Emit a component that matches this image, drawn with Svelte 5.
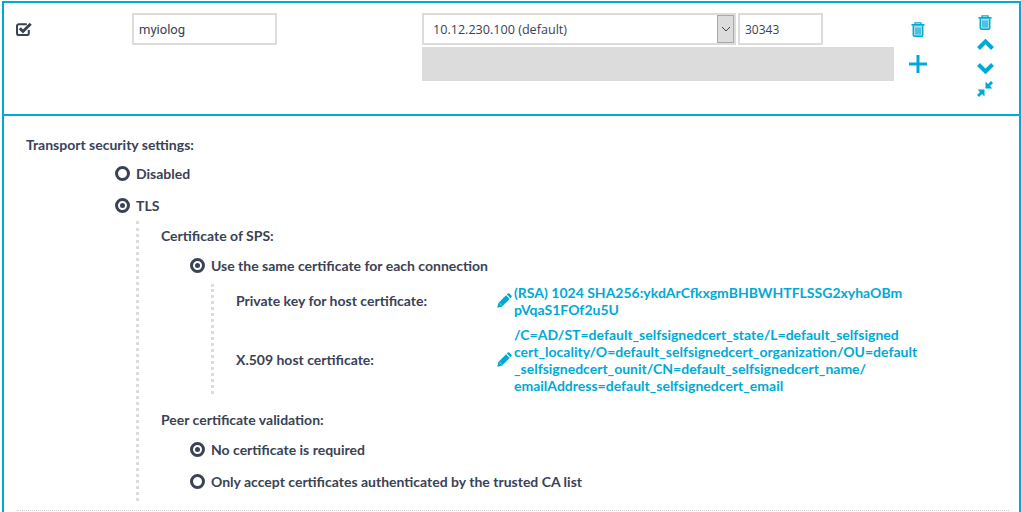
<script>
</script>

{#snippet trash()}
  <svg class="trash" viewBox="0 0 14 15" width="14" height="15">
    <path d="M0.500 2h13v1.800h-13z" fill="#00aad4"/>
    <path d="M4 2.500V.8h6v1.700" fill="none" stroke="#00aad4" stroke-width="1.300"/>
    <path d="M2.300 4v9a1.200 1.200 0 0 0 1.200 1.200h7a1.200 1.200 0 0 0 1.200-1.200V4" fill="#a6e0ef" stroke="#00aad4" stroke-width="1.500"/>
    <path d="M5 5.500v7M7 5.500v7M9 5.500v7" stroke="#00aad4" stroke-width="1.100"/>
  </svg>
{/snippet}

{#snippet pencil()}
  <svg class="pencil" viewBox="0 0 15 15" width="15" height="15">
    <path d="M0.300 14.700l1-4.600 7.800-7.800 3.600 3.600-7.800 7.800z" fill="#00aad4"/>
    <path d="M9.800 1.600l1-1a1.200 1.200 0 0 1 1.600 0l2 2a1.200 1.200 0 0 1 0 1.600l-1 1z" fill="#00aad4"/>
    <path d="M2.600 10.300l1.900 1.900" stroke="#bfeaf5" stroke-width=".8"/>
  </svg>
{/snippet}

<div class="page">
  <div class="head">
    <div class="col-check">
      <svg class="check" viewBox="0 0 16 14" width="16" height="14">
        <path d="M12.800 8v3.200a1.800 1.800 0 0 1-1.800 1.800H2.800A1.800 1.800 0 0 1 1 11.200V4a1.800 1.800 0 0 1 1.800-1.800h8" fill="none" stroke="#3a4256" stroke-width="2"/>
        <path d="M3.800 6.300l3.200 3.200L14.700 1.800" fill="none" stroke="#3a4256" stroke-width="3"/>
      </svg>
    </div>
    <div class="col-name"><input class="field name" value="myiolog" /></div>
    <div class="col-addr">
      <div class="addr-row">
        <div class="field select">
          <span>10.12.230.100 (default)</span>
          <span class="arrow">
            <svg viewBox="0 0 10 6" width="10" height="6"><path d="M1 1l4 4 4-4" fill="none" stroke="#444" stroke-width="1"/></svg>
          </span>
        </div>
        <input class="field port" value="30343" />
      </div>
      <div class="grey"></div>
    </div>
    <div class="col-add">
      {@render trash()}
      <svg class="plus" viewBox="0 0 18 18" width="18" height="18"><path d="M9 0v18M0 9h18" stroke="#00aad4" stroke-width="3"/></svg>
    </div>
    <div class="col-move">
      {@render trash()}
      <svg class="up" viewBox="0 0 17 11" width="17" height="11"><path d="M1.500 9.500L8.500 2.500l7 7" fill="none" stroke="#00aad4" stroke-width="4"/></svg>
      <svg class="down" viewBox="0 0 17 11" width="17" height="11"><path d="M1.500 1.500L8.500 8.500l7-7" fill="none" stroke="#00aad4" stroke-width="4"/></svg>
      <svg class="compress" viewBox="0 0 18 18" width="18" height="18">
        <path d="M9.500 8.500V1.500L12 4l3-3 2 2-3 3 2.500 2.500zM8.500 9.500v7L6 14l-3 3-2-2 3-3-2.500-2.500z" fill="#00aad4"/>
      </svg>
    </div>
  </div>

  <div class="body">
    <div class="title">Transport security settings:</div>
    <div class="level1">
      <div class="radio-row"><span class="radio"></span>Disabled</div>
      <div class="radio-row"><span class="radio on"></span>TLS</div>
      <div class="tls">
        <div class="title">Certificate of SPS:</div>
        <div class="level2">
          <div class="radio-row"><span class="radio on"></span>Use the same certificate for each connection</div>
          <div class="cert">
            <div class="cert-row">
              <div class="cert-label">Private key for host certificate:</div>
              {@render pencil()}
              <div class="cert-link">(RSA) 1024 SHA256:ykdArCfkxgmBHBWHTFLSSG2xyhaOBm<br />pVqaS1FOf2u5U</div>
            </div>
            <div class="cert-row">
              <div class="cert-label">X.509 host certificate:</div>
              {@render pencil()}
              <div class="cert-link">/C=AD/ST=default_selfsignedcert_state/L=default_selfsigned<br />cert_locality/O=default_selfsignedcert_organization/OU=default<br />_selfsignedcert_ounit/CN=default_selfsignedcert_name/<br />emailAddress=default_selfsignedcert_email</div>
            </div>
          </div>
        </div>
        <div class="title peer">Peer certificate validation:</div>
        <div class="level2">
          <div class="radio-row"><span class="radio on"></span>No certificate is required</div>
          <div class="radio-row"><span class="radio"></span>Only accept certificates authenticated by the trusted CA list</div>
        </div>
      </div>
    </div>
  </div>
</div>

<style>
  :global(body) {
    margin: 0;
    background: #fff;
  }

  .page {
    box-sizing: border-box;
    width: 1019px;
    height: 511px;
    margin: 1px 0 0 2px;
    border: 2px solid #00aad4;
    border-bottom: none;
    font-family: Lato, sans-serif;
    font-size: 14px;
    font-weight: 700;
    color: #3a4256;
    overflow: hidden;
  }

  .head {
    display: flex;
    box-sizing: border-box;
    height: 113px;
    padding: 10px 0 0 0;
    border-bottom: 2px solid #00aad4;
  }

  .col-check {
    width: 128px;
    padding: 9px 0 0 12px;
    box-sizing: border-box;
  }

  .check {
    display: block;
  }

  .col-name {
    width: 290px;
  }

  .field {
    box-sizing: border-box;
    height: 32px;
    border: 2px solid #dcdcdc;
    background: #fff;
    font-family: Roboto, sans-serif;
    font-size: 13px;
    font-weight: 400;
    color: #3a4256;
    outline: none;
  }

  .name {
    display: block;
    width: 145px;
    padding: 0 5px;
  }

  .col-addr {
    width: 472px;
  }

  .addr-row {
    display: flex;
    gap: 2px;
  }

  .select {
    width: 314px;
    display: flex;
    align-items: center;
    justify-content: space-between;
    padding: 0 0 0 9px;
    font-family: "Open Sans", sans-serif;
    font-size: 12.6px;
  }

  .arrow {
    display: flex;
    align-items: center;
    justify-content: center;
    width: 17px;
    height: 28px;
    background: #dcdcdc;
    border: 1px solid #a8a8a8;
    box-sizing: border-box;
  }

  .port {
    width: 85px;
    padding: 0 5px;
    font-family: "Open Sans", sans-serif;
    font-size: 12px;
  }

  .grey {
    height: 34px;
    margin-top: 2px;
    background: #dcdcdc;
  }

  .col-add {
    width: 82px;
    display: flex;
    flex-direction: column;
    align-items: flex-start;
    padding-left: 15px;
    box-sizing: border-box;
  }

  .col-add .trash {
    margin: 9px 0 0 2px;
  }

  .plus {
    margin-top: 18px;
    display: block;
  }

  .col-move {
    display: flex;
    flex-direction: column;
    align-items: center;
    width: 18px;
    padding-top: 2px;
  }

  .col-move svg {
    display: block;
  }

  .up {
    margin-top: 9px;
  }

  .down {
    margin-top: 13px;
  }

  .compress {
    margin-top: 6px;
  }

  .body {
    box-sizing: border-box;
    height: 395px;
    margin: 0 10px 0 13px;
    padding: 20px 0 0 9px;
    border-bottom: 1px dotted #cfcfcf;
  }

  .title {
    line-height: 17px;
  }

  .level1 {
    margin-left: 89px;
    margin-top: 4px;
  }

  .radio-row {
    display: flex;
    align-items: center;
    height: 32px;
    gap: 6px;
  }

  .radio {
    box-sizing: border-box;
    width: 15px;
    height: 15px;
    border: 3px solid #3a4256;
    border-radius: 50%;
    flex: none;
    position: relative;
  }

  .radio.on::after {
    content: "";
    position: absolute;
    left: 2px;
    top: 2px;
    width: 5px;
    height: 5px;
    border-radius: 50%;
    background: #3a4256;
  }

  .tls {
    margin-left: 21px;
    padding: 6px 0 12px 22px;
    height: 280px;
    box-sizing: border-box;
    border-left: 3px dotted #dcdcdc;
  }

  .level2 {
    margin: 5px 0 0 29px;
  }

  .cert {
    margin: 3px 0 0 21px;
    padding-left: 22px;
    border-left: 3px dotted #dcdcdc;
    height: 110px;
    box-sizing: border-box;
  }

  .cert-row {
    display: flex;
    align-items: center;
  }

  .cert-row + .cert-row {
    margin-top: 8px;
  }

  .cert-label {
    width: 261px;
    flex: none;
    padding-bottom: 2px;
  }

  .pencil {
    flex: none;
    margin: 0 2px 2px 0;
  }

  .cert-link {
    color: #00aad4;
    line-height: 17px;
    white-space: nowrap;
  }

  .peer {
    margin-top: 17px;
  }
</style>
